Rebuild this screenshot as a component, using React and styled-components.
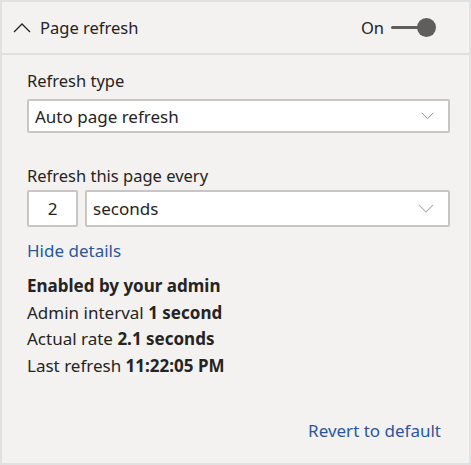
import styled, { createGlobalStyle } from "styled-components";

const Global = createGlobalStyle`
  html, body { margin: 0; padding: 0; background: #fff; }
  body { font-family: "Noto Sans", "Open Sans", sans-serif; color: #252423; }
  * { box-sizing: border-box; }
`;

const Panel = styled.div`
  width: 471px;
  height: 465px;
  border: 2px solid #e1e1e1;
  background: #f3f2f1;
  display: flex;
  flex-direction: column;
`;

const Header = styled.div`
  height: 53px;
  display: flex;
  align-items: center;
  padding: 0 0 0 11px;
  border-bottom: 2px solid #e1dfdd;
`;

const Title = styled.span`
  font-size: 16.5px;
  margin-left: 9px;
  flex: 1;
`;

const ToggleLabel = styled.span`
  font-size: 16.5px;
  margin-right: 7px;
`;

const Toggle = styled.div`
  position: relative;
  width: 45px;
  height: 20px;
  margin-right: 33px;
  &::before {
    content: "";
    position: absolute;
    left: 0;
    right: 8px;
    top: 8px;
    height: 3px;
    background: #605e5c;
    border-radius: 2px;
  }
  &::after {
    content: "";
    position: absolute;
    right: 0;
    top: 0;
    width: 19px;
    height: 19px;
    border-radius: 50%;
    background: #605e5c;
  }
`;

const Body = styled.div`
  flex: 1;
  display: flex;
  flex-direction: column;
  padding: 15px 19px 0 25px;
`;

const Label = styled.div`
  font-size: 16.5px;
  line-height: 22px;
  margin-bottom: ${(p) => p.$mb || 7}px;
`;

const Select = styled.div`
  height: ${(p) => p.$h || 34}px;
  flex: 1;
  border: 2px solid #c8c6c4;
  border-radius: 2px;
  background: #fff;
  display: flex;
  align-items: center;
  padding: 0 14px 0 6px;
  font-size: 17px;
  justify-content: space-between;
`;

const NumberBox = styled(Select)`
  flex: 0 0 51px;
  justify-content: center;
  padding: 0;
`;

const Row = styled.div`
  display: flex;
  gap: 7px;
  margin-bottom: ${(p) => p.$mb || 0}px;
`;

const Link = styled.div`
  color: #2b579a;
  font-size: 17px;
  line-height: 22px;
  align-self: ${(p) => (p.$right ? "flex-end" : "flex-start")};
  margin-right: ${(p) => (p.$right ? 9 : 0)}px;
  margin-bottom: ${(p) => p.$mb || 0}px;
`;

const Details = styled.div`
  margin-top: 11px;
  display: flex;
  flex-direction: column;
  font-size: 17px;
  line-height: 26.7px;
  b { font-weight: 700; }
`;

const Spacer = styled.div`
  flex: 1;
`;

const Chevron = ({ up, size = 18, color = "#252423" }) => (
  <svg width={size} height={size / 2 + 1} viewBox="0 0 18 10" fill="none">
    <path
      d={up ? "M1 9 L9 1 L17 9" : "M1 1 L9 9 L17 1"}
      stroke={color}
      strokeWidth="1.3"
    />
  </svg>
);

export default function App() {
  return (
    <>
      <Global />
      <Panel>
        <Header>
          <Chevron up />
          <Title>Page refresh</Title>
          <ToggleLabel>On</ToggleLabel>
          <Toggle />
        </Header>
        <Body>
          <Label>Refresh type</Label>
          <Row $mb={32}>
            <Select>
              Auto page refresh
              <Chevron size={13} color="#8a8886" />
            </Select>
          </Row>
          <Label $mb={3}>Refresh this page every</Label>
          <Row $mb={13}>
            <NumberBox $h={37}>2</NumberBox>
            <Select $h={37}>
              seconds
              <Chevron size={16} color="#b3b0ad" />
            </Select>
          </Row>
          <Link>Hide details</Link>
          <Details>
            <b>Enabled by your admin</b>
            <span>
              Admin interval <b>1 second</b>
            </span>
            <span>
              Actual rate <b>2.1 seconds</b>
            </span>
            <span>
              Last refresh <b>11:22:05 PM</b>
            </span>
          </Details>
          <Spacer />
          <Link $right $mb={21}>
            Revert to default
          </Link>
        </Body>
      </Panel>
    </>
  );
}
